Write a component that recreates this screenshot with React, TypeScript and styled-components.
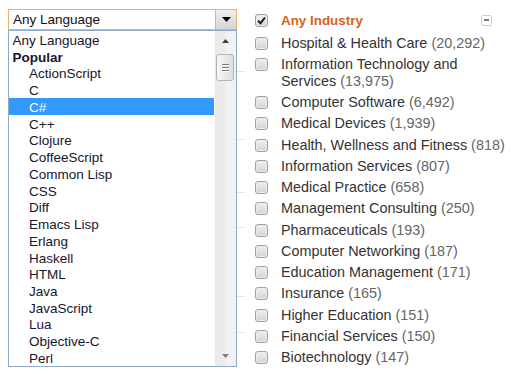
import React from "react";
import styled, { createGlobalStyle } from "styled-components";

const Global = createGlobalStyle`
  html, body { margin: 0; padding: 0; background: #fff; }
  body {
    font-family: "Liberation Sans", Arial, sans-serif;
    width: 514px;
    height: 377px;
    overflow: hidden;
  }
`;

const Page = styled.div`
  display: flex;
  align-items: flex-start;
  width: 514px;
  height: 377px;
  overflow: hidden;
`;

const LeftCol = styled.div`
  position: relative;
  flex: none;
  width: 255px;
  height: 377px;
  box-sizing: border-box;
  padding: 9px 0 0 8px;
`;

const Select = styled.div`
  box-sizing: border-box;
  width: 229px;
  height: 21px;
  border: 1px solid #e2b668;
  background: #fff;
  display: flex;
  align-items: center;
  justify-content: space-between;
  padding-left: 4px;
  font-size: 13.5px;
  color: #111;
`;

const SelectButton = styled.div`
  box-sizing: border-box;
  width: 21px;
  height: 19px;
  background: linear-gradient(#eeeeee, #d5d5d5);
  border-left: 1px solid #b9b9b9;
  display: flex;
  align-items: center;
  justify-content: center;
`;

const Backdrop = styled.div`
  display: flex;
  flex-direction: column;
  width: 237px;
`;

const BackdropRow = styled.div<{ $h: number }>`
  height: ${(p) => p.$h}px;
  box-sizing: border-box;
  border-bottom: 1px solid #e3e3e3;
`;

const Dropdown = styled.div`
  position: absolute;
  top: 30px;
  left: 8px;
  z-index: 2;
  box-sizing: border-box;
  width: 229px;
  height: 337px;
  border: 1px solid #8fa9c9;
  background: #fff;
  display: flex;
`;

const Options = styled.ul`
  list-style: none;
  margin: 0;
  padding: 0;
  flex: 1;
  min-width: 0;
  overflow: hidden;
`;

const Option = styled.li<{ $indent?: boolean; $selected?: boolean; $group?: boolean }>`
  box-sizing: border-box;
  height: 16.74px;
  padding-top: 3px;
  line-height: 13.74px;
  font-size: 13.5px;
  white-space: nowrap;
  padding-left: ${(p) => (p.$indent ? 20 : 3.5)}px;
  margin-right: 1px;
  background: ${(p) => (p.$selected ? "#3399ff" : "transparent")};
  color: ${(p) => (p.$selected ? "#ffffff" : "#16162e")};
  font-weight: ${(p) => (p.$group ? "bold" : "normal")};
`;

const Scrollbar = styled.div`
  flex: none;
  width: 21px;
  display: flex;
  flex-direction: column;
  background: linear-gradient(to right, #e9e9e9 0, #ececec 50%, #f2f2f2 50%, #f2f2f2 100%);
`;

const ScrollArrow = styled.div`
  height: 20px;
  display: flex;
  align-items: center;
  justify-content: center;
`;

const Thumb = styled.div`
  box-sizing: border-box;
  margin: 3px 2px 0 1px;
  height: 27px;
  border: 1px solid #b3b3b3;
  border-radius: 3px;
  background: linear-gradient(to right, #f7f7f7, #dedede);
  display: flex;
  flex-direction: column;
  align-items: center;
  justify-content: center;
  gap: 2px;
`;

const Grip = styled.span`
  display: block;
  width: 7px;
  height: 1px;
  background: #7a7a7a;
  box-shadow: 0 1px 0 #fff;
`;

const Spacer = styled.div`
  flex: 1;
`;

const RightCol = styled.div`
  flex: none;
  width: 257px;
  box-sizing: border-box;
  padding-top: 11.5px;
  display: flex;
  flex-direction: column;
`;

const Row = styled.div`
  display: flex;
  align-items: flex-start;
  gap: 13px;
  padding-bottom: 4.25px;
  font-size: 14.4px;
  line-height: 17px;
  color: #333;
`;

const HeaderRow = styled(Row)`
  padding-bottom: 6px;
`;

const Box = styled.span`
  flex: none;
  box-sizing: border-box;
  width: 13px;
  height: 13px;
  margin-top: 2px;
  border: 1px solid #a2a2a2;
  border-radius: 3px;
  background: linear-gradient(#f1f1f1, #d2d2d2);
  box-shadow: inset 0 0 0 1px #ececec;
  display: flex;
  align-items: center;
  justify-content: center;
`;

const Label = styled.span`
  flex: 1;
  min-width: 0;
`;

const HeaderLabel = styled.span`
  font-size: 13.4px;
  font-weight: bold;
  color: #d8621a;
`;

const Count = styled.span`
  color: #666;
`;

const Collapse = styled.span`
  margin-left: auto;
  margin-right: 20px;
  margin-top: 3px;
  box-sizing: border-box;
  width: 11px;
  height: 11px;
  border: 1px solid #cfcfcf;
  border-radius: 2px;
  background: #fff;
  display: flex;
  align-items: center;
  justify-content: center;
  &::after {
    content: "";
    width: 5px;
    height: 2px;
    background: #7d7d7d;
  }
`;

const languages: { name: string; indent?: boolean; group?: boolean; selected?: boolean }[] = [
  { name: "Any Language" },
  { name: "Popular", group: true },
  { name: "ActionScript", indent: true },
  { name: "C", indent: true },
  { name: "C#", indent: true, selected: true },
  { name: "C++", indent: true },
  { name: "Clojure", indent: true },
  { name: "CoffeeScript", indent: true },
  { name: "Common Lisp", indent: true },
  { name: "CSS", indent: true },
  { name: "Diff", indent: true },
  { name: "Emacs Lisp", indent: true },
  { name: "Erlang", indent: true },
  { name: "Haskell", indent: true },
  { name: "HTML", indent: true },
  { name: "Java", indent: true },
  { name: "JavaScript", indent: true },
  { name: "Lua", indent: true },
  { name: "Objective-C", indent: true },
  { name: "Perl", indent: true },
];

const industries: [string, string][] = [
  ["Hospital & Health Care", "(20,292)"],
  ["Information Technology and Services", "(13,975)"],
  ["Computer Software", "(6,492)"],
  ["Medical Devices", "(1,939)"],
  ["Health, Wellness and Fitness", "(818)"],
  ["Information Services", "(807)"],
  ["Medical Practice", "(658)"],
  ["Management Consulting", "(250)"],
  ["Pharmaceuticals", "(193)"],
  ["Computer Networking", "(187)"],
  ["Education Management", "(171)"],
  ["Insurance", "(165)"],
  ["Higher Education", "(151)"],
  ["Financial Services", "(150)"],
  ["Biotechnology", "(147)"],
];

const backdropRows = [42, 68, 53, 35, 69, 36];

const Triangle = ({ dir, color, w, h }: { dir: "up" | "down"; color: string; w: number; h: number }) => (
  <svg width={w} height={h} viewBox={`0 0 ${w} ${h}`}>
    {dir === "down" ? (
      <polygon points={`0,0 ${w},0 ${w / 2},${h}`} fill={color} />
    ) : (
      <polygon points={`0,${h} ${w},${h} ${w / 2},0`} fill={color} />
    )}
  </svg>
);

const Check = () => (
  <svg width="9" height="9" viewBox="0 0 9 9">
    <path d="M1 4.6 L3.5 7.2 L8 1.5" fill="none" stroke="#1a1a1a" strokeWidth="1.9" />
  </svg>
);

export default function App() {
  return (
    <>
      <Global />
      <Page>
        <LeftCol>
          <Select>
            <span>Any Language</span>
            <SelectButton>
              <Triangle dir="down" color="#000" w={9} h={5} />
            </SelectButton>
          </Select>
          <Backdrop>
            {backdropRows.map((h, i) => (
              <BackdropRow key={i} $h={h} />
            ))}
          </Backdrop>
          <Dropdown>
            <Options>
              {languages.map((l) => (
                <Option key={l.name} $indent={l.indent} $group={l.group} $selected={l.selected}>
                  {l.name}
                </Option>
              ))}
            </Options>
            <Scrollbar>
              <ScrollArrow>
                <Triangle dir="up" color="#3c3c3c" w={7} h={4} />
              </ScrollArrow>
              <Thumb>
                <Grip />
                <Grip />
                <Grip />
              </Thumb>
              <Spacer />
              <ScrollArrow>
                <Triangle dir="down" color="#7c7c7c" w={7} h={4} />
              </ScrollArrow>
            </Scrollbar>
          </Dropdown>
        </LeftCol>
        <RightCol>
          <HeaderRow>
            <Box>
              <Check />
            </Box>
            <HeaderLabel>Any Industry</HeaderLabel>
            <Collapse />
          </HeaderRow>
          {industries.map(([name, count]) => (
            <Row key={name}>
              <Box />
              <Label>
                {name} <Count>{count}</Count>
              </Label>
            </Row>
          ))}
        </RightCol>
      </Page>
    </>
  );
}
